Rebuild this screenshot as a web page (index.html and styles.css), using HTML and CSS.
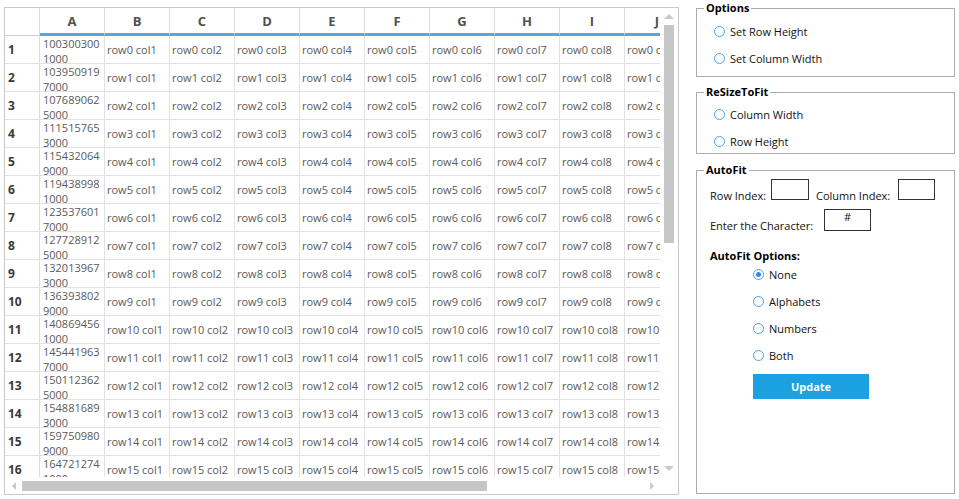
FILE: index.html
```html
<!DOCTYPE html>
<html lang="en">
<head>
<meta charset="utf-8">
<title>AutoFit</title>
<link rel="stylesheet" href="styles.css">
</head>
<body>
<div class="grid-wrap">
  <div class="viewport">
    <div class="sheet">
      <div class="hd corner"></div>
      <div class="hd col">A</div><div class="hd col">B</div><div class="hd col">C</div><div class="hd col">D</div><div class="hd col">E</div><div class="hd col">F</div><div class="hd col">G</div><div class="hd col">H</div><div class="hd col">I</div><div class="hd col">J</div>

      <div class="rh">1</div><div class="c num">1003003001000</div><div class="c">row0 col1</div><div class="c">row0 col2</div><div class="c">row0 col3</div><div class="c">row0 col4</div><div class="c">row0 col5</div><div class="c">row0 col6</div><div class="c">row0 col7</div><div class="c">row0 col8</div><div class="c">row0 col9</div>
      <div class="rh">2</div><div class="c num">1039509197000</div><div class="c">row1 col1</div><div class="c">row1 col2</div><div class="c">row1 col3</div><div class="c">row1 col4</div><div class="c">row1 col5</div><div class="c">row1 col6</div><div class="c">row1 col7</div><div class="c">row1 col8</div><div class="c">row1 col9</div>
      <div class="rh">3</div><div class="c num">1076890625000</div><div class="c">row2 col1</div><div class="c">row2 col2</div><div class="c">row2 col3</div><div class="c">row2 col4</div><div class="c">row2 col5</div><div class="c">row2 col6</div><div class="c">row2 col7</div><div class="c">row2 col8</div><div class="c">row2 col9</div>
      <div class="rh">4</div><div class="c num">1115157653000</div><div class="c">row3 col1</div><div class="c">row3 col2</div><div class="c">row3 col3</div><div class="c">row3 col4</div><div class="c">row3 col5</div><div class="c">row3 col6</div><div class="c">row3 col7</div><div class="c">row3 col8</div><div class="c">row3 col9</div>
      <div class="rh">5</div><div class="c num">1154320649000</div><div class="c">row4 col1</div><div class="c">row4 col2</div><div class="c">row4 col3</div><div class="c">row4 col4</div><div class="c">row4 col5</div><div class="c">row4 col6</div><div class="c">row4 col7</div><div class="c">row4 col8</div><div class="c">row4 col9</div>
      <div class="rh">6</div><div class="c num">1194389981000</div><div class="c">row5 col1</div><div class="c">row5 col2</div><div class="c">row5 col3</div><div class="c">row5 col4</div><div class="c">row5 col5</div><div class="c">row5 col6</div><div class="c">row5 col7</div><div class="c">row5 col8</div><div class="c">row5 col9</div>
      <div class="rh">7</div><div class="c num">1235376017000</div><div class="c">row6 col1</div><div class="c">row6 col2</div><div class="c">row6 col3</div><div class="c">row6 col4</div><div class="c">row6 col5</div><div class="c">row6 col6</div><div class="c">row6 col7</div><div class="c">row6 col8</div><div class="c">row6 col9</div>
      <div class="rh">8</div><div class="c num">1277289125000</div><div class="c">row7 col1</div><div class="c">row7 col2</div><div class="c">row7 col3</div><div class="c">row7 col4</div><div class="c">row7 col5</div><div class="c">row7 col6</div><div class="c">row7 col7</div><div class="c">row7 col8</div><div class="c">row7 col9</div>
      <div class="rh">9</div><div class="c num">1320139673000</div><div class="c">row8 col1</div><div class="c">row8 col2</div><div class="c">row8 col3</div><div class="c">row8 col4</div><div class="c">row8 col5</div><div class="c">row8 col6</div><div class="c">row8 col7</div><div class="c">row8 col8</div><div class="c">row8 col9</div>
      <div class="rh">10</div><div class="c num">1363938029000</div><div class="c">row9 col1</div><div class="c">row9 col2</div><div class="c">row9 col3</div><div class="c">row9 col4</div><div class="c">row9 col5</div><div class="c">row9 col6</div><div class="c">row9 col7</div><div class="c">row9 col8</div><div class="c">row9 col9</div>
      <div class="rh">11</div><div class="c num">1408694561000</div><div class="c">row10 col1</div><div class="c">row10 col2</div><div class="c">row10 col3</div><div class="c">row10 col4</div><div class="c">row10 col5</div><div class="c">row10 col6</div><div class="c">row10 col7</div><div class="c">row10 col8</div><div class="c">row10 col9</div>
      <div class="rh">12</div><div class="c num">1454419637000</div><div class="c">row11 col1</div><div class="c">row11 col2</div><div class="c">row11 col3</div><div class="c">row11 col4</div><div class="c">row11 col5</div><div class="c">row11 col6</div><div class="c">row11 col7</div><div class="c">row11 col8</div><div class="c">row11 col9</div>
      <div class="rh">13</div><div class="c num">1501123625000</div><div class="c">row12 col1</div><div class="c">row12 col2</div><div class="c">row12 col3</div><div class="c">row12 col4</div><div class="c">row12 col5</div><div class="c">row12 col6</div><div class="c">row12 col7</div><div class="c">row12 col8</div><div class="c">row12 col9</div>
      <div class="rh">14</div><div class="c num">1548816893000</div><div class="c">row13 col1</div><div class="c">row13 col2</div><div class="c">row13 col3</div><div class="c">row13 col4</div><div class="c">row13 col5</div><div class="c">row13 col6</div><div class="c">row13 col7</div><div class="c">row13 col8</div><div class="c">row13 col9</div>
      <div class="rh">15</div><div class="c num">1597509809000</div><div class="c">row14 col1</div><div class="c">row14 col2</div><div class="c">row14 col3</div><div class="c">row14 col4</div><div class="c">row14 col5</div><div class="c">row14 col6</div><div class="c">row14 col7</div><div class="c">row14 col8</div><div class="c">row14 col9</div>
      <div class="rh">16</div><div class="c num">1647212741000</div><div class="c">row15 col1</div><div class="c">row15 col2</div><div class="c">row15 col3</div><div class="c">row15 col4</div><div class="c">row15 col5</div><div class="c">row15 col6</div><div class="c">row15 col7</div><div class="c">row15 col8</div><div class="c">row15 col9</div>
    </div>
  </div>
  <div class="vscroll">
    <div class="arrow-box"><span class="tri tri-up"></span></div>
    <div class="vthumb"></div>
    <div class="spacer"></div>
    <div class="arrow-box"><span class="tri tri-down"></span></div>
  </div>
  <div class="hscroll">
    <div class="harrow-box"><span class="tri tri-left"></span></div>
    <div class="hthumb"></div>
    <div class="spacer"></div>
    <div class="harrow-box"><span class="tri tri-right"></span></div>
  </div>
  <div class="corner-box"></div>
</div>

<div class="panel">
  <fieldset class="fs fs-options">
    <legend>Options</legend>
    <div class="radios">
      <label class="radio-row"><span class="radio"></span>Set Row Height</label>
      <label class="radio-row"><span class="radio"></span>Set Column Width</label>
    </div>
  </fieldset>

  <fieldset class="fs fs-resize">
    <legend>ReSizeToFit</legend>
    <div class="radios">
      <label class="radio-row"><span class="radio"></span>Column Width</label>
      <label class="radio-row"><span class="radio"></span>Row Height</label>
    </div>
  </fieldset>

  <fieldset class="fs fs-autofit">
    <legend>AutoFit</legend>
    <div class="af-body">
      <div class="af-row af-row1">
        <span class="af-label lbl-row">Row Index:</span>
        <input class="box box-row" type="text">
        <span class="af-label lbl-col">Column Index:</span>
        <input class="box box-col" type="text">
      </div>
      <div class="af-row af-row2">
        <span class="af-label lbl-char">Enter the Character:</span>
        <input class="box box-char" type="text" value="#">
      </div>
      <div class="af-title">AutoFit Options:</div>
      <div class="radios af-radios">
        <label class="radio-row"><span class="radio checked"></span>None</label>
        <label class="radio-row"><span class="radio"></span>Alphabets</label>
        <label class="radio-row"><span class="radio"></span>Numbers</label>
        <label class="radio-row"><span class="radio"></span>Both</label>
      </div>
      <button class="update-btn" type="button">Update</button>
    </div>
  </fieldset>
</div>
</body>
</html>
```

FILE: styles.css
```css
* { box-sizing: border-box; }

html, body {
  margin: 0;
  padding: 0;
  background: #ffffff;
}

body {
  display: flex;
  align-items: flex-start;
  font-family: "Open Sans", "Noto Sans", sans-serif;
  font-size: 11px;
  color: #111;
}

/* ---------- grid ---------- */
.grid-wrap {
  margin: 7px 0 0 4px;
  width: 675px;
  height: 488px;
  border: 1px solid #c9c9c9;
  display: grid;
  grid-template-columns: 655px 18px;
  grid-template-rows: 469px 17px;
}

.viewport {
  overflow: hidden;
}

.sheet {
  display: grid;
  grid-template-columns: 35px repeat(10, 65px);
  grid-auto-rows: 28px;
  width: 685px;
}

.hd {
  border-right: 1px solid #dcdcdc;
  font-weight: bold;
  font-size: 13px;
  color: #505050;
  text-align: center;
  line-height: 25px;
  padding-top: 1px;
}

.hd.corner {
  border-bottom: 1px solid #cfcfcf;
}

.hd.col {
  border-bottom: 3px solid #5aa6dc;
}

.rh {
  border-right: 1px solid #dedede;
  border-bottom: 1px solid #e2e2e2;
  font-weight: bold;
  font-size: 12px;
  color: #3a3a3a;
  line-height: 27px;
  padding-left: 3px;
}

.c {
  border-right: 1px solid #e2e2e2;
  border-bottom: 1px solid #e2e2e2;
  color: #5a5a5a;
  line-height: 27px;
  padding-left: 2px;
  white-space: nowrap;
  overflow: hidden;
}

.c.num {
  white-space: normal;
  word-break: break-all;
  line-height: 15px;
  padding: 0 2px 0 3px;
}

/* scrollbars */
.vscroll {
  display: flex;
  flex-direction: column;
  align-items: center;
  background: #fff;
}

.arrow-box {
  height: 17px;
  width: 100%;
  display: flex;
  align-items: center;
  justify-content: center;
}

.vthumb {
  width: 10px;
  height: 218px;
  background: #c6c6c6;
}

.spacer { flex: 1; }

.hscroll {
  display: flex;
  align-items: center;
}

.harrow-box {
  width: 17px;
  height: 100%;
  display: flex;
  align-items: center;
  justify-content: center;
}

.hthumb {
  width: 465px;
  height: 10px;
  background: #c6c6c6;
}

.tri {
  width: 0;
  height: 0;
  display: block;
}

.tri-up {
  border-left: 5px solid transparent;
  border-right: 5px solid transparent;
  border-bottom: 5px solid #c9c9c9;
}

.tri-down {
  border-left: 5px solid transparent;
  border-right: 5px solid transparent;
  border-top: 5px solid #c9c9c9;
}

.tri-left {
  border-top: 4px solid transparent;
  border-bottom: 4px solid transparent;
  border-right: 4px solid #c9c9c9;
}

.tri-right {
  border-top: 4px solid transparent;
  border-bottom: 4px solid transparent;
  border-left: 4px solid #c9c9c9;
}

/* ---------- side panel ---------- */
.panel {
  margin-left: 17px;
  width: 259px;
  display: flex;
  flex-direction: column;
}

.fs {
  margin: 0;
  min-width: 0;
  border: 1px solid #ababab;
  padding: 0 0 0 7px;
}

.fs legend {
  padding: 0 2px;
  font-weight: bold;
  font-size: 11px;
  line-height: 16px;
  color: #000;
}

.radios {
  display: flex;
  flex-direction: column;
  gap: 7px;
  padding-left: 10px;
}

.radio-row {
  height: 20px;
  display: flex;
  align-items: center;
  font-size: 11px;
  color: #111;
}

.radio {
  width: 11px;
  height: 11px;
  border: 1px solid #45a5e6;
  border-radius: 50%;
  margin-right: 5px;
  display: flex;
  align-items: center;
  justify-content: center;
  flex: none;
}

.radio.checked::after {
  content: "";
  width: 5px;
  height: 5px;
  border-radius: 50%;
  background: #2b8fdd;
}

.fs-options .radios {
  padding-top: 5px;
  padding-bottom: 8px;
}

.fs-resize {
  margin-top: 7px;
}

.fs-resize .radios {
  padding-top: 4px;
  padding-bottom: 2px;
}

.fs-autofit {
  margin-top: 8px;
}

.af-body {
  padding: 1px 0 94px 6px;
}

.af-row {
  display: flex;
  align-items: flex-end;
}

.af-label {
  line-height: 15px;
  margin-bottom: -3px;
  color: #111;
  white-space: nowrap;
}

.lbl-row { width: 61px; }
.lbl-col { width: 82px; margin-left: 7px; }
.lbl-char { width: 114px; margin-bottom: -2px; }

.box {
  border: 1px solid #333;
  border-radius: 0;
  margin: 0;
  font-family: "Open Sans", "Noto Sans", sans-serif;
  font-size: 11px;
  color: #111;
  background: #fff;
  outline: none;
}

.box-row { width: 38px; height: 21px; padding: 0; }
.box-col { width: 37px; height: 21px; padding: 0; }

.af-row2 {
  margin-top: 9px;
}

.box-char {
  width: 47px;
  height: 22px;
  padding: 0 0 8px 0;
  text-align: center;
}

.af-title {
  margin-top: 17px;
  font-weight: bold;
  font-size: 11px;
  line-height: 16px;
  color: #000;
}

.af-radios {
  padding-left: 43px;
  margin-top: 0;
}

.update-btn {
  display: block;
  margin: 9px 0 0 43px;
  width: 116px;
  height: 25px;
  border: none;
  border-radius: 0;
  background: #1ba1e2;
  color: #fff;
  font-family: "Open Sans", "Noto Sans", sans-serif;
  font-weight: bold;
  font-size: 11px;
  padding: 0;
}
```
